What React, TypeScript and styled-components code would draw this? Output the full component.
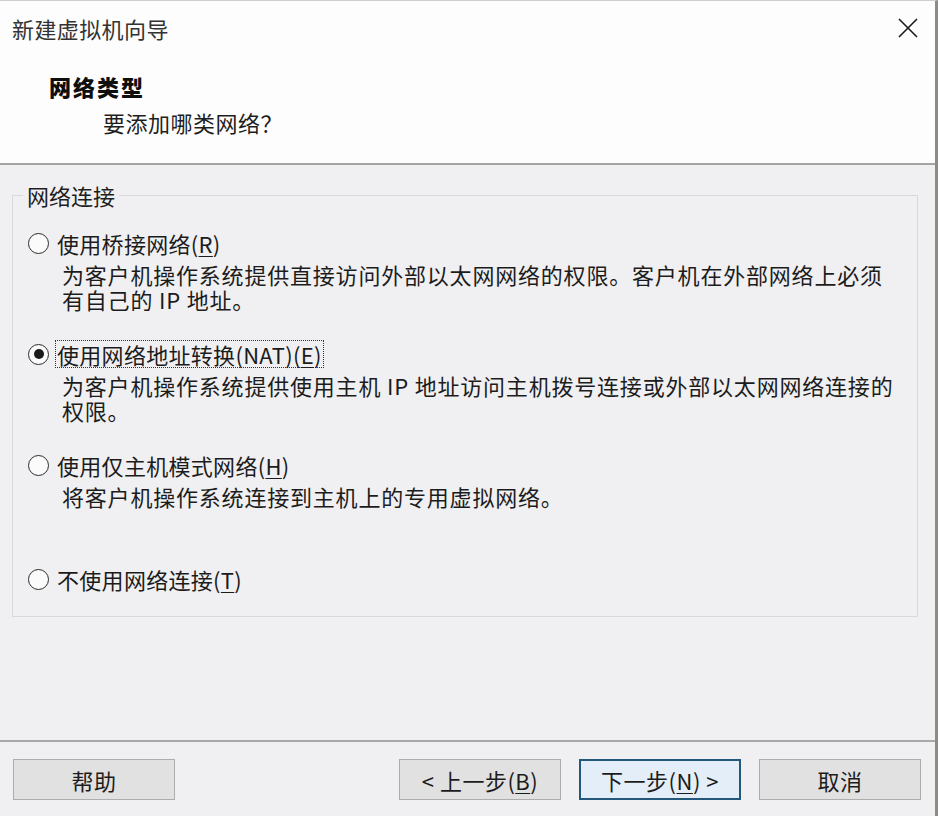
import React from "react";
import styled, { createGlobalStyle } from "styled-components";

const GlobalStyle = createGlobalStyle`
  html, body {
    margin: 0;
    padding: 0;
    background: #f0f0f2;
  }
  body {
    font-family: "Noto Sans CJK SC", "Noto Sans", sans-serif;
    color: #1c1c1c;
  }
`;

interface OptionData {
  label: React.ReactNode;
  desc?: string[];
  checked?: boolean;
  focused?: boolean;
  gap: number;
}

const options: OptionData[] = [
  {
    label: (
      <>
        使用桥接网络(<u>R</u>)
      </>
    ),
    desc: [
      "为客户机操作系统提供直接访问外部以太网网络的权限。客户机在外部网络上必须",
      "有自己的 IP 地址。",
    ],
    gap: 18,
  },
  {
    label: (
      <>
        使用网络地址转换(NAT)(<u>E</u>)
      </>
    ),
    desc: [
      "为客户机操作系统提供使用主机 IP 地址访问主机拨号连接或外部以太网网络连接的",
      "权限。",
    ],
    checked: true,
    focused: true,
    gap: 27,
  },
  {
    label: (
      <>
        使用仅主机模式网络(<u>H</u>)
      </>
    ),
    desc: ["将客户机操作系统连接到主机上的专用虚拟网络。"],
    gap: 27,
  },
  {
    label: (
      <>
        不使用网络连接(<u>T</u>)
      </>
    ),
    gap: 55,
  },
];

const App = () => {
  return (
    <>
      <GlobalStyle />
      <Window>
        <Header>
          <TitleRow>
            <Title>新建虚拟机向导</Title>
            <CloseButton aria-label="关闭">
              <svg width="20" height="20" viewBox="0 0 20 20">
                <path
                  d="M1 1 L19 19 M19 1 L1 19"
                  stroke="#1a1a1a"
                  strokeWidth="1.6"
                  fill="none"
                />
              </svg>
            </CloseButton>
          </TitleRow>
          <Heading>网络类型</Heading>
          <Subtitle>要添加哪类网络？</Subtitle>
        </Header>

        <Body>
          <Group>
            <Legend>网络连接</Legend>
            {options.map((opt, i) => (
              <Option key={i} $gap={opt.gap}>
                <OptionRow>
                  <Radio $checked={!!opt.checked} />
                  <OptionLabel $focused={!!opt.focused}>{opt.label}</OptionLabel>
                </OptionRow>
                {opt.desc && (
                  <Desc>
                    {opt.desc.map((line, j) => (
                      <DescLine key={j}>{line}</DescLine>
                    ))}
                  </Desc>
                )}
              </Option>
            ))}
          </Group>
        </Body>

        <Footer>
          <Button>帮助</Button>
          <Spacer />
          <Button>
            &lt; 上一步(<u>B</u>)
          </Button>
          <Button $primary>
            下一步(<u>N</u>) &gt;
          </Button>
          <Button>取消</Button>
        </Footer>
      </Window>
    </>
  );
};

export default App;

const Window = styled.div`
  width: 935px;
  height: 815px;
  border-right: 3px solid #8e8a88;
  border-top: 1px solid #cfcfcf;
  display: flex;
  flex-direction: column;
  background: #f0f0f2;
`;

const Header = styled.div`
  height: 162px;
  flex-shrink: 0;
  background: #fdfdfd;
  border-bottom: 2px solid #a4a4a4;
  display: flex;
  flex-direction: column;
`;

const TitleRow = styled.div`
  display: flex;
  align-items: center;
  justify-content: space-between;
  padding: 12px 17px 0 12px;
  height: 30px;
`;

const Title = styled.div`
  font-size: 22px;
  line-height: 30px;
  color: #333;
  letter-spacing: 0.4px;
`;

const CloseButton = styled.div`
  width: 20px;
  height: 20px;
  display: flex;
`;

const Heading = styled.div`
  margin: 28px 0 0 49px;
  font-size: 22px;
  font-weight: 900;
  line-height: 30px;
  letter-spacing: 2px;
  color: #0e0e0e;
`;

const Subtitle = styled.div`
  margin: 6px 0 0 103px;
  font-size: 22px;
  line-height: 30px;
  letter-spacing: 0.5px;
  color: #1e1e1e;
`;

const Body = styled.div`
  flex: 1;
  padding: 15px 17px 0 12px;
`;

const Group = styled.fieldset`
  margin: 0;
  padding: 0 0 22px 15px;
  border: 1px solid #d9d9dc;
  border-radius: 0;
  min-width: 0;
`;

const Legend = styled.legend`
  margin-left: -5px;
  padding: 0 4px 0 4px;
  font-size: 22px;
  line-height: 30px;
  color: #1e1e1e;
`;

const Option = styled.div<{ $gap: number }>`
  margin-top: ${(p) => p.$gap}px;
`;

const OptionRow = styled.div`
  display: flex;
  align-items: center;
  height: 30px;
`;

const Radio = styled.span<{ $checked: boolean }>`
  box-sizing: border-box;
  width: 21px;
  height: 21px;
  border-radius: 50%;
  border: 1.8px solid #2b2b2b;
  background: #fbfbfb;
  display: flex;
  align-items: center;
  justify-content: center;
  flex-shrink: 0;

  &::after {
    content: "";
    display: ${(p) => (p.$checked ? "block" : "none")};
    width: 10px;
    height: 10px;
    border-radius: 50%;
    background: #1a1a1a;
  }
`;

const OptionLabel = styled.span<{ $focused: boolean }>`
  margin-left: 6px;
  font-size: 22px;
  line-height: 26px;
  letter-spacing: 0.3px;
  color: #1c1c1c;
  padding: 0 1px;
  border: 1px dotted ${(p) => (p.$focused ? "#333" : "transparent")};

  u {
    text-underline-offset: 3px;
    text-decoration-thickness: 1px;
  }
`;

const Desc = styled.div`
  margin-top: 4px;
  padding-left: 34px;
  font-size: 22px;
  letter-spacing: 0.8px;
  color: #1c1c1c;
`;

const DescLine = styled.div`
  height: 25px;
  line-height: 25px;
  white-space: nowrap;
`;

const Footer = styled.div`
  flex-shrink: 0;
  border-top: 2px solid #a8a8a8;
  height: 76px;
  box-sizing: border-box;
  padding: 17px 14px 0 13px;
  display: flex;
  align-items: flex-start;
  gap: 18px;
`;

const Spacer = styled.div`
  flex: 1;
`;

const Button = styled.div<{ $primary?: boolean }>`
  box-sizing: border-box;
  width: 162px;
  height: 41px;
  display: flex;
  align-items: center;
  justify-content: center;
  font-size: 22px;
  letter-spacing: 0.5px;
  color: #1c1c1c;
  background: ${(p) => (p.$primary ? "#e3eef8" : "#e1e1e1")};
  border: ${(p) => (p.$primary ? "2px solid #23587c" : "1px solid #adadad")};

  u {
    text-underline-offset: 3px;
    text-decoration-thickness: 1px;
  }
`;
